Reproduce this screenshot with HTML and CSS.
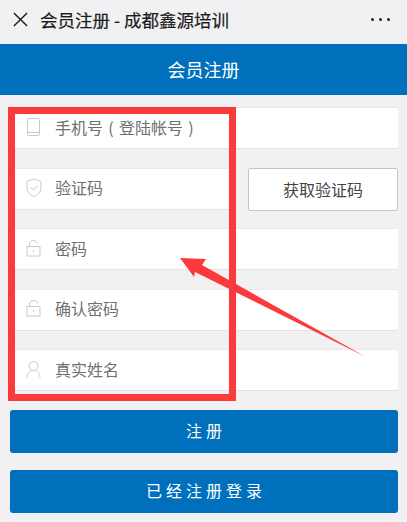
FILE: index.html
```html
<!DOCTYPE html>
<html lang="zh-CN">
<head>
<meta charset="utf-8">
<title>会员注册</title>
<link rel="stylesheet" href="styles.css">
</head>
<body>
<div class="topbar">
  <svg class="close" viewBox="0 0 16 16" width="15" height="15"><path d="M1 1 L15 15 M15 1 L1 15"/></svg>
  <span class="top-title">会员注册 - 成都鑫源培训</span>
  <span class="dots"><i></i><i></i><i></i></span>
</div>
<div class="header">会员注册</div>
<form class="form">
  <div class="row">
    <svg class="ico" viewBox="0 0 16 20" width="16" height="20"><rect x="1.5" y="0.5" width="12" height="17" rx="1"/><path d="M1.5 14.5 H13.5"/></svg>
    <span class="ph">手机号<span class="paren">(</span>登陆帐号<span class="paren">)</span></span>
  </div>
  <div class="split">
    <div class="row grow">
      <svg class="ico" viewBox="0 0 16 20" width="16" height="20"><path d="M8 1 L15 3.5 V10 C15 14.5 11 17.5 8 18.5 C5 17.5 1 14.5 1 10 V3.5 Z"/><path d="M4.5 9.5 L7.5 12 L11.5 7.5"/></svg>
      <span class="ph">验证码</span>
    </div>
    <button class="code" type="button">获取验证码</button>
  </div>
  <div class="row">
    <svg class="ico" viewBox="0 0 16 20" width="16" height="20"><rect x="1" y="7.5" width="13" height="9.5"/><path d="M3.5 7.5 V5 C3.5 0.5 11 0.5 11.5 4.5"/><path d="M7.5 11 V13"/></svg>
    <span class="ph">密码</span>
  </div>
  <div class="row">
    <svg class="ico" viewBox="0 0 16 20" width="16" height="20"><rect x="1" y="7.5" width="13" height="9.5"/><path d="M3.5 7.5 V5 C3.5 0.5 11 0.5 11.5 4.5"/><path d="M7.5 11 V13"/></svg>
    <span class="ph">确认密码</span>
  </div>
  <div class="row">
    <svg class="ico" viewBox="0 0 16 20" width="16" height="20"><circle cx="7.5" cy="6" r="4.5"/><path d="M1 17.5 C1 13 4 11 5.5 10.5 M14 17.5 C14 13 11 11 9.5 10.5"/></svg>
    <span class="ph">真实姓名</span>
  </div>
  <button class="primary" type="button">注册</button>
  <button class="primary second" type="button">已经注册登录</button>
</form>
<div class="redbox"></div>
<svg class="arrow" viewBox="0 0 407 522" width="407" height="522"><path d="M180 258 L206 259 L202 265 L366 357 L195 272 L194 277 Z"/></svg>
</body>
</html>
```

FILE: styles.css
```css
* { box-sizing: border-box; }
html, body { margin: 0; padding: 0; }
body {
  width: 407px;
  height: 522px;
  overflow: hidden;
  position: relative;
  background: #f1f0f2;
  font-family: "Noto Sans CJK SC", "Liberation Sans", sans-serif;
}
.topbar {
  height: 44px;
  display: flex;
  align-items: center;
  padding: 0 12px 5px 13px;
  color: #1a1a1a;
}
.close { fill: none; stroke: #1a1a1a; stroke-width: 1.5; flex: none; }
.top-title { margin-left: 12px; font-size: 17.5px; -webkit-text-stroke: 0.2px #1a1a1a; flex: 1; white-space: nowrap; }
.dots { display: flex; gap: 5px; padding-right: 5px; }
.dots i { width: 3px; height: 3px; border-radius: 50%; background: #222; }
.header {
  height: 51px;
  background: #0070bd;
  color: #fff;
  font-size: 18px;
  display: flex;
  align-items: center;
  justify-content: center;
  padding-bottom: 2px;
}
.form {
  padding: 12px 9px 0 10px;
  display: flex;
  flex-direction: column;
  gap: 18.5px;
}
.row {
  height: 42px;
  background: #fff;
  border-bottom: 1px solid #e3e2e4;
  border-top: 1px solid #e9e8ea;
  display: flex;
  align-items: center;
  padding: 0 0 1px 16px;
  border-radius: 2px;
}
.split { display: flex; gap: 12px; height: 42px; }
.grow { flex: none; width: 226px; }
.ico { flex: none; fill: none; stroke: #c9c9cb; stroke-width: 1; }
.ph { margin-left: 13px; font-size: 16px; line-height: 22px; color: #706f73; white-space: nowrap; transform: translateY(-1px); }
.paren { display: inline-block; width: 16px; text-align: center; }
.code {
  width: 150px;
  height: 43px;
  background: #fff;
  border: 1px solid #c4c3c6;
  border-radius: 2px;
  font: inherit;
  font-size: 16px;
  color: #444;
  padding: 0;
}
.primary {
  height: 43px;
  background: #0070bd;
  color: #fff;
  border: 0;
  border-radius: 3px;
  font: inherit;
  font-size: 16px;
  letter-spacing: 4px;
  padding: 0 0 3px 4px;
}
.second { margin-top: -1px; }
.redbox {
  position: absolute;
  left: 8px;
  top: 107px;
  width: 228px;
  height: 294px;
  border: 7px solid #fb3a3c;
  pointer-events: none;
}
.arrow { position: absolute; left: 0; top: 0; fill: #fb3a3c; pointer-events: none; }
```
